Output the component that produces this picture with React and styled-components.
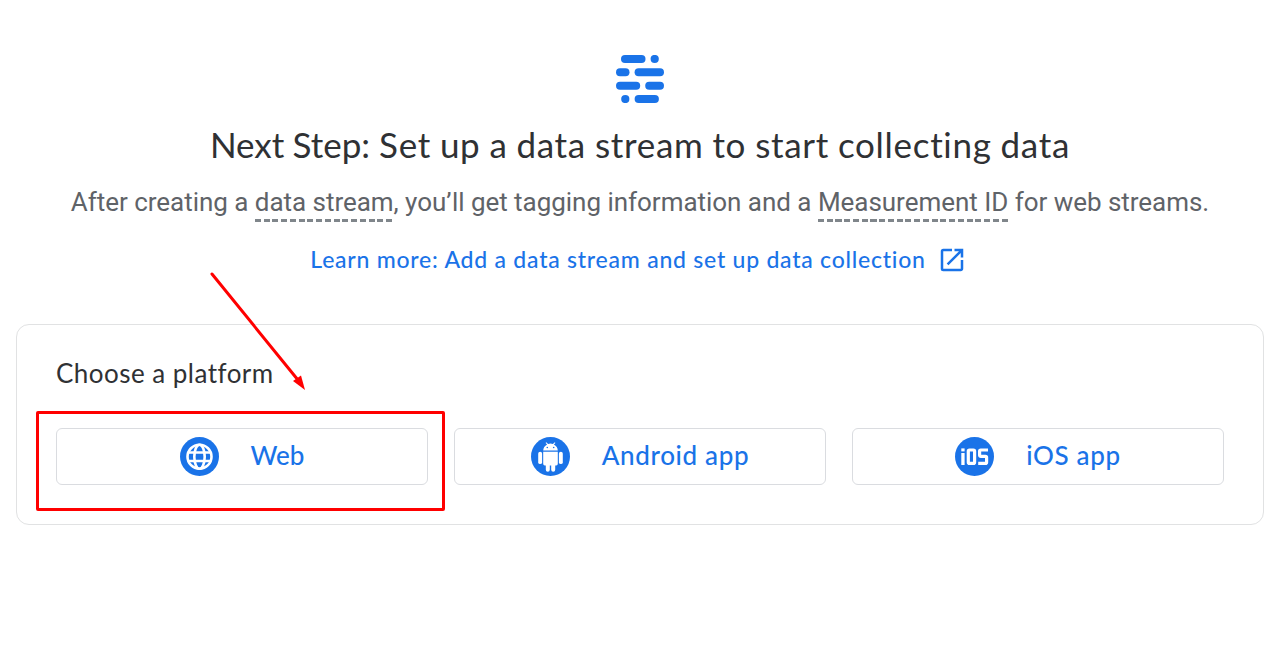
import React from "react";
import styled, { createGlobalStyle } from "styled-components";

const Global = createGlobalStyle`
  * { box-sizing: border-box; }
  body { margin: 0; background: #fff; overflow: hidden; }
`;

const display = `"Google Sans", Lato, "Liberation Sans", sans-serif`;
const blue = "#1a73e8";

const Page = styled.main`
  position: relative;
  width: 1280px;
  height: 649px;
  padding: 55px 16px 0;
`;

const Header = styled.header`
  display: flex;
  flex-direction: column;
  align-items: center;
`;

const StreamLogo = styled.svg`
  display: block;
  width: 48px;
  height: 48px;
  fill: ${blue};
`;

const Title = styled.h1`
  margin: 19px 0 0;
  font: 400 35px/44px ${display};
  letter-spacing: 0.7px;
  word-spacing: -0.7px;
  color: #2f3134;
  white-space: nowrap;
`;

const TitleLead = styled.span`
  letter-spacing: 0;
`;

const Description = styled.p`
  margin: 17px 0 0;
  height: 40px;
  font: 400 26px/38px Roboto, sans-serif;
  letter-spacing: -0.03px;
  color: #5f6368;
  white-space: nowrap;
`;

const Term = styled.span`
  display: inline-block;
  height: 39px;
  background: repeating-linear-gradient(90deg, #80868b 0 6px, transparent 6px 8.75px) 0 100% / 100% 3px no-repeat;
`;

const LearnMore = styled.a`
  display: flex;
  align-items: center;
  gap: 11px;
  margin: 15px 3px 0 0;
  height: 42px;
  font: 500 23px/42px ${display};
  letter-spacing: 0.76px;
  color: ${blue};
  white-space: nowrap;
`;

const OpenIcon = styled.svg`
  position: relative;
  top: 1px;
  width: 30px;
  height: 30px;
  fill: ${blue};
`;

const Card = styled.section`
  margin-top: 44px;
  height: 201px;
  padding: 31px 39px 0;
  border: 1px solid #e1e2e3;
  border-radius: 13px;
`;

const CardTitle = styled.h2`
  margin: 0;
  height: 34px;
  font: 400 26px/34px ${display};
  letter-spacing: 0.47px;
  color: #2f3134;
`;

const Platforms = styled.div`
  display: grid;
  grid-template-columns: repeat(3, 372px);
  gap: 26px;
  margin-top: 38px;
`;

const PlatformButton = styled.button`
  display: flex;
  align-items: center;
  justify-content: center;
  gap: 32px;
  height: 57px;
  padding: 0;
  border: 1px solid #dadce0;
  border-radius: 6px;
  background: #fff;
  color: ${blue};
  font: 500 26px/34px ${display};
  letter-spacing: ${(p) => p.$spacing || 0}px;
  white-space: nowrap;
`;

const PlatformName = styled.span`
  padding-bottom: 3px;
`;

const Badge = styled.svg`
  width: 39px;
  height: 39px;
  flex: none;
`;

const Highlight = styled.div`
  position: absolute;
  left: 36px;
  top: 411px;
  width: 409px;
  height: 100px;
  border: 3px solid #f00;
  border-radius: 2px;
`;

const Arrow = styled.svg`
  position: absolute;
  left: 200px;
  top: 262px;
  width: 116px;
  height: 136px;
`;

const WebBadge = () => (
  <Badge viewBox="0 0 39 39">
    <circle cx="19.5" cy="19.5" r="19.5" fill={blue} />
    <g fill="none" stroke="#fff" strokeWidth="2.6">
      <circle cx="19.5" cy="19.7" r="12" />
      <ellipse cx="19.5" cy="19.7" rx="5.2" ry="12" />
      <path d="M8.6 15.5h21.8M8.6 24h21.8" />
    </g>
  </Badge>
);

const AndroidBadge = () => (
  <Badge viewBox="0 0 39 39">
    <circle cx="19.5" cy="19.5" r="19.5" fill={blue} />
    <g fill="#fff">
      <path d="M12.2 13.6a7.3 7.3 0 0 1 3.9-6.2l-1.5-1.5.6-.6 1.9 1.7a8 8 0 0 1 4.8 0l1.9-1.7.6.6-1.5 1.5a7.3 7.3 0 0 1 3.9 6.2z" />
      <path d="M12.2 14.7h14.6v12.1a1.6 1.6 0 0 1-1.6 1.6h-1v4.3a2 2 0 0 1-4 0v-4.3h-1.4v4.3a2 2 0 0 1-4 0v-4.3h-1a1.6 1.6 0 0 1-1.6-1.6z" />
      <rect x="7.2" y="14.7" width="3.9" height="12.4" rx="1.95" />
      <rect x="27.9" y="14.7" width="3.9" height="12.4" rx="1.95" />
    </g>
    <circle cx="16.3" cy="10.5" r=".8" fill={blue} />
    <circle cx="22.7" cy="10.5" r=".8" fill={blue} />
  </Badge>
);

const IosBadge = () => (
  <Badge viewBox="0 0 39 39">
    <circle cx="19.5" cy="19.5" r="19.5" fill={blue} />
    <rect x="6.3" y="11.4" width="3.3" height="3" fill="#fff" />
    <rect x="6.3" y="16" width="3.3" height="12" fill="#fff" />
    <g fill="none" stroke="#fff" strokeWidth="3.2">
      <rect x="13.3" y="13" width="6.3" height="13.4" rx="1.2" />
      <path d="M33 13h-7.2a1.2 1.2 0 0 0-1.200 1.200v4a1.200 1.200 0 0 0 1.200 1.200h4.600a1.200 1.200 0 0 1 1.200 1.200v4.600a1.200 1.200 0 0 1-1.200 1.200h-7.200" />
    </g>
  </Badge>
);

export default function App() {
  return (
    <Page>
      <Global />
      <Header>
        <StreamLogo viewBox="0 0 48 48">
          <rect x="5" y="0" width="24.5" height="8" rx="4" />
          <circle cx="38.7" cy="4" r="4.1" />
          <rect x="0" y="13.3" width="13.5" height="8" rx="4" />
          <rect x="18.6" y="13.3" width="29.4" height="8" rx="4" />
          <rect x="0" y="26.7" width="24.2" height="8" rx="4" />
          <rect x="29.2" y="26.7" width="18.8" height="8" rx="4" />
          <circle cx="9.3" cy="44" r="4.1" />
          <rect x="18.6" y="40" width="24.3" height="8" rx="4" />
        </StreamLogo>
        <Title>
          <TitleLead>Next Step:</TitleLead> Set up a data stream to start collecting data
        </Title>
        <Description>
          After creating a <Term>data stream</Term>, you’ll get tagging information and a{" "}
          <Term>Measurement ID</Term> for web streams.
        </Description>
        <LearnMore>
          Learn more: Add a data stream and set up data collection
          <OpenIcon viewBox="0 0 24 24">
            <path d="M19 19H5V5h7V3H5a2 2 0 0 0-2 2v14a2 2 0 0 0 2 2h14c1.1 0 2-.9 2-2v-7h-2v7zM14 3v2h3.59l-9.83 9.83 1.41 1.41L19 6.41V10h2V3h-7z" />
          </OpenIcon>
        </LearnMore>
      </Header>
      <Card>
        <CardTitle>Choose a platform</CardTitle>
        <Platforms>
          <PlatformButton>
            <WebBadge />
            <PlatformName>Web</PlatformName>
          </PlatformButton>
          <PlatformButton $spacing={0.64}>
            <AndroidBadge />
            <PlatformName>Android app</PlatformName>
          </PlatformButton>
          <PlatformButton $spacing={0.64}>
            <IosBadge />
            <PlatformName>iOS app</PlatformName>
          </PlatformButton>
        </Platforms>
      </Card>
      <Highlight />
      <Arrow viewBox="200 262 116 136">
        <path d="M212 274L298 380" stroke="#f00" strokeWidth="3" strokeLinecap="round" />
        <path d="M305 390L293 381L301 375.5Z" fill="#f00" />
      </Arrow>
    </Page>
  );
}
